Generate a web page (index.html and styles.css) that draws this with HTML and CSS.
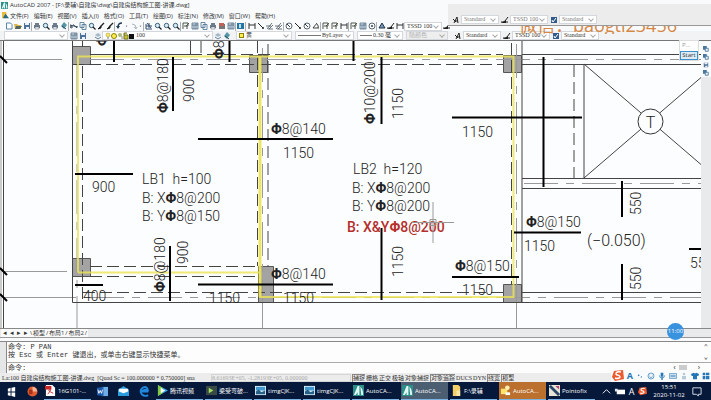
FILE: index.html
```html
<!DOCTYPE html>
<html lang="zh-CN">
<head>
    <meta charset="UTF-8">
    <meta name="viewport" content="width=device-width, initial-scale=1.0">
    <title>AutoCAD 2007</title>
    <link rel="stylesheet" href="styles.css">
</head>
<body>
    <!-- icon set -->
    <svg class="sprite" aria-hidden="true">
        <symbol id="new" viewBox="0 0 8 8"><path d="M1.5 1h4l1.5 1.500v4.500h-5.500z" fill="#fff" stroke="#5b87ad"/></symbol>
        <symbol id="open" viewBox="0 0 8 8"><path d="M0 2h3l1 1h3v4H1z" fill="#d8b74c"/><path d="M2 4h6L6 7H1z" fill="#54645f"/></symbol>
        <symbol id="save" viewBox="0 0 8 8"><path d="M1 1h6v6H1z" fill="#4d7194"/><path d="M2 1h4v2H2zM3 5h3v2H3z" fill="#eef"/></symbol>
        <symbol id="print" viewBox="0 0 8 8"><path d="M2 1h4v2h1v3H1V3h1z" fill="#6e7c8c"/><path d="M2 5h4v2H2z" fill="#fff" stroke="#456" stroke-width=".5"/></symbol>
        <symbol id="find" viewBox="0 0 8 8"><circle cx="3.500" cy="3.500" r="2.200" fill="#d8ebf5" stroke="#3b6078"/><path d="M5 5l2.500 2.500" stroke="#222" stroke-width="1.300"/></symbol>
        <symbol id="globe" viewBox="0 0 8 8"><path d="M4 0l3 3-3 4-3-3z" fill="#5597a5"/><path d="M2 4l4 3" stroke="#285064"/></symbol>
        <symbol id="cut" viewBox="0 0 8 8"><path d="M0 3l8 2M3 2.500L7 6M1 3v3" fill="none" stroke="#33475c"/><circle cx="1.500" cy="5" r="1" fill="none" stroke="#33475c" stroke-width=".7"/></symbol>
        <symbol id="copy" viewBox="0 0 8 8"><path d="M1 .5h4v5H1zM3 2.500h4v5H3z" fill="#f7fbff" stroke="#49718f" stroke-width=".8"/></symbol>
        <symbol id="brush" viewBox="0 0 8 8"><path d="M7 1L3 5" stroke="#222" stroke-width="1.300"/><path d="M4 4L1 7l3-1z" fill="#222" stroke="#222"/></symbol>
        <symbol id="undo" viewBox="0 0 8 8"><path d="M6 1Q2 1 2 5" fill="none" stroke="#223b56" stroke-width="1.500"/><path d="M0 4l2 3 2-3z" fill="#223b56"/></symbol>
        <symbol id="redo" viewBox="0 0 8 8"><path d="M2 2q4 0 4 4M4 5l2 2 1-2" fill="none" stroke="#99a3ac" stroke-width=".8"/></symbol>
        <symbol id="drop" viewBox="0 0 8 8"><path d="M2.500 3.500h3L4 5z" fill="#333"/></symbol>
        <symbol id="pan" viewBox="0 0 8 8"><path d="M1 2v5h6M2 1l4 5M4 1v5M1 4h6" fill="none" stroke="#344f6c"/></symbol>
        <symbol id="props" viewBox="0 0 8 8"><path d="M1 1h6v6H1zM1 3h6M3 3v4M5 1v6" fill="#dae5ef" stroke="#3f5c75" stroke-width=".7"/></symbol>
        <symbol id="red" viewBox="0 0 8 8"><path d="M1 2h6v5H1z" fill="#777"/><path d="M1 1h5v3H1z" fill="#be6459"/></symbol>
        <symbol id="blue" viewBox="0 0 8 8"><path d="M0 1h7v6H0z" fill="#2674a1"/><path d="M2 2h2v4H2z" fill="#b9e1ef"/></symbol>
        <symbol id="dim" viewBox="0 0 8 8"><path d="M1 1v6M7 1v6M1 3h6" stroke="#333" fill="none"/></symbol>
        <symbol id="line" viewBox="0 0 8 8"><path d="M1 1l5 5" stroke="#222"/><circle cx="6" cy="6" r="1" fill="#222"/></symbol>
        <symbol id="align" viewBox="0 0 8 8"><path d="M1 7l5-6M3 7l4-4M0 4h5M2 7h5" stroke="#45525e" fill="none" stroke-width=".8"/></symbol>
        <symbol id="arc" viewBox="0 0 8 8"><circle cx="4" cy="4" r="3" fill="none" stroke="#36414b" stroke-width=".8"/><path d="M2 2l3 3" stroke="#36414b"/></symbol>
        <symbol id="target" viewBox="0 0 8 8"><circle cx="4" cy="4" r="3" fill="none" stroke="#36414b" stroke-width=".8"/><circle cx="4" cy="4" r="1" fill="#36414b"/></symbol>
        <symbol id="angle" viewBox="0 0 8 8"><path d="M5 1L1 6h6M5 2q2 2 1 4" stroke="#333" fill="none" stroke-width=".9"/></symbol>
        <symbol id="quick" viewBox="0 0 8 8"><path d="M1 7V1h5v3H2M4 4l3-3M5 7V4" stroke="#4e5848" fill="none"/></symbol>
        <symbol id="tri" viewBox="0 0 8 8"><path d="M4 1L1 6h6z" fill="#7898b4" stroke="#203551"/></symbol>
        <symbol id="pen" viewBox="0 0 8 8"><path d="M7 1L4 5M0 6h7" stroke="#222"/><path d="M0 7l5-3v3z" fill="#222"/></symbol>
        <symbol id="text" viewBox="0 0 8 8"><path d="M2 7l3-6 1 6M3 5h3M1 3l3 3" stroke="#222" fill="none"/></symbol>
        <symbol id="check" viewBox="0 0 8 8"><path d="M1 1h6v6H1z" fill="#315b8c"/><path d="M2 4l1 2 3-4" stroke="#fff" fill="none"/></symbol>
        <symbol id="layers" viewBox="0 0 8 8"><path d="M1 3l3-2 3 2-3 2z" fill="#a6b9cb"/><path d="M1 5l3 2 3-2" stroke="#6782a1" fill="none"/></symbol>
        <symbol id="draworder" viewBox="0 0 8 8"><path d="M0 0h5v5H0z" fill="#4878a0"/><path d="M3 3h4v4H3z" fill="#e7f1f8" stroke="#3a6690"/></symbol>
        <symbol id="acad" viewBox="0 0 12 12"><path d="M0 0h12v12H0z" fill="#2b8e88"/><path d="M1 11L5 1h2v10H5V8L3 11zM8 2q3 2 3 9H9z" fill="#e2f7f3"/></symbol>
        <symbol id="photo" viewBox="0 0 12 12"><path d="M0 1h12v10H0z" fill="#d7edf8"/><path d="M1 2h10v4H1z" fill="#4398cf"/><path d="M1 10V7l3-2 3 3 4-2v4z" fill="#276087"/></symbol>
        <symbol id="sogou" viewBox="0 0 12 12"><path d="M2 1l9-1 1 9-9 2-3-4z" fill="#ed582d"/><path d="M9 2Q4 1 4 4q0 1 3 1.500Q9 7 7 8 5 9 3 8" fill="none" stroke="#fff" stroke-width="1.500"/></symbol>
    </svg>

    <div class="app">
        <header class="titlebar">
            <svg class="icon"><use href="#acad"/></svg>
            <h1>AutoCAD 2007 - [F:\录辅\自建房\dwg\自建房结构施工图-讲课.dwg]</h1>
        </header>

        <nav class="menubar">
            <svg class="icon" viewBox="0 0 8 8"><path d="M0 0h5v7H0z" fill="#e9be3d"/><path d="M2 5l2-3 4 5H1z" fill="#286984"/></svg>
            <button>文件(F)</button><button>编辑(E)</button><button>视图(V)</button><button>插入(I)</button><button>格式(O)</button><button>工具(T)</button><button>绘图(D)</button><button>标注(N)</button><button>修改(M)</button><button>窗口(W)</button><button>帮助(H)</button>
        </nav>

        <div class="toolbar">
            <div class="group">
                <button aria-label="新建"><svg><use href="#new"/></svg></button>
                <button aria-label="打开"><svg><use href="#open"/></svg></button>
                <button aria-label="保存"><svg><use href="#save"/></svg></button>
            </div>
            <div class="group">
                <button aria-label="打印"><svg><use href="#print"/></svg></button>
                <button aria-label="预览"><svg><use href="#find"/></svg></button>
                <button aria-label="发布"><svg><use href="#print"/></svg></button>
                <button aria-label="网上发布"><svg><use href="#globe"/></svg></button>
            </div>
            <div class="group">
                <button aria-label="剪切"><svg><use href="#cut"/></svg></button>
                <button aria-label="复制"><svg><use href="#copy"/></svg></button>
                <button aria-label="粘贴"><svg><use href="#find"/></svg></button>
                <button aria-label="特性匹配"><svg><use href="#brush"/></svg></button>
                <button aria-label="块编辑"><svg><use href="#brush"/></svg></button>
            </div>
            <div class="group">
                <button aria-label="放弃"><svg><use href="#undo"/></svg></button>
                <button class="slim" aria-label="放弃列表"><svg><use href="#drop"/></svg></button>
                <button aria-label="重做"><svg><use href="#redo"/></svg></button>
                <button class="slim" aria-label="重做列表"><svg><use href="#drop"/></svg></button>
            </div>
            <div class="group">
                <button aria-label="平移"><svg><use href="#pan"/></svg></button>
                <button aria-label="实时缩放"><svg><use href="#find"/></svg></button>
                <button aria-label="窗口缩放"><svg><use href="#find"/></svg></button>
                <button aria-label="上一个"><svg><use href="#find"/></svg></button>
            </div>
            <div class="group">
                <button aria-label="特性"><svg><use href="#quick"/></svg></button>
                <button aria-label="设计中心"><svg><use href="#props"/></svg></button>
                <button aria-label="工具选项板"><svg><use href="#copy"/></svg></button>
                <button aria-label="图纸集"><svg><use href="#print"/></svg></button>
                <button aria-label="标记集"><svg><use href="#red"/></svg></button>
                <button aria-label="计算器"><svg><use href="#props"/></svg></button>
            </div>
            <div class="group help">
                <button aria-label="帮助"><svg><use href="#blue"/></svg></button>
            </div>
            <div class="group">
                <button aria-label="线性"><svg><use href="#dim"/></svg></button>
                <button aria-label="对齐"><svg><use href="#line"/></svg></button>
                <button aria-label="弧长"><svg><use href="#align"/></svg></button>
                <button aria-label="坐标"><svg><use href="#align"/></svg></button>
            </div>
            <div class="group">
                <button aria-label="半径"><svg><use href="#arc"/></svg></button>
                <button aria-label="折弯"><svg><use href="#line"/></svg></button>
                <button aria-label="直径"><svg><use href="#arc"/></svg></button>
                <button aria-label="角度"><svg><use href="#angle"/></svg></button>
            </div>
            <div class="group">
                <button aria-label="快速标注"><svg><use href="#quick"/></svg></button>
                <button aria-label="基线"><svg><use href="#quick"/></svg></button>
                <button aria-label="连续"><svg><use href="#dim"/></svg></button>
            </div>
            <div class="group">
                <button aria-label="引线"><svg><use href="#quick"/></svg></button>
                <button aria-label="公差"><svg><use href="#props"/></svg></button>
                <button aria-label="圆心"><svg><use href="#target"/></svg></button>
            </div>
            <div class="group last">
                <button aria-label="编辑标注"><svg><use href="#tri"/></svg></button>
                <button aria-label="编辑文字"><svg><use href="#pen"/></svg></button>
                <button aria-label="更新"><svg><use href="#dim"/></svg></button>
            </div>
            <label class="combo style"><select aria-label="当前标注样式"><option>TSSD 100</option></select></label>
            <button aria-label="标注样式"><svg><use href="#pen"/></svg></button>
        </div>

        <div class="toolbar properties">
            <label class="combo workspace"><select aria-label="工作空间"><option></option></select></label>
            <button aria-label="工作空间设置"><svg><use href="#props"/></svg></button>
            <button aria-label="我的工作空间"><svg><use href="#save"/></svg></button>
            <button class="spaced" aria-label="图层特性"><svg><use href="#layers"/></svg></button>
            <label class="combo layer">
                <svg class="layer-state" viewBox="0 0 29 8"><circle cx="3" cy="3" r="2" fill="#f5e36a" stroke="#a89220" stroke-width=".5"/><path d="M2 6h2" stroke="#777"/><circle cx="9" cy="4" r="2.500" fill="#fff04d" stroke="#8c8100"/><circle cx="15" cy="3" r="2" fill="#a9bb7c"/><path d="M17 4v3" stroke="#888"/><path d="M19 3h4v4h-4zM19 3V1h3" fill="#c6c22d" stroke="#777726"/><path d="M24 2h5v5h-5z" fill="#111"/></svg>
                <select aria-label="图层"><option>100</option></select>
            </label>
            <button aria-label="置为当前"><svg><use href="#layers"/></svg></button>
            <button aria-label="上一个图层"><svg><use href="#globe"/></svg></button>
            <label class="combo color"><i class="swatch"></i><select aria-label="颜色"><option>黄</option></select></label>
            <label class="combo linetype"><i class="rule"></i><select aria-label="线型"><option>ByLayer</option></select></label>
            <label class="combo weight"><i class="rule"></i><select aria-label="线宽"><option>0.30 毫</option></select></label>
            <label class="combo plot"><select aria-label="打印样式" disabled><option>随颜色</option></select></label>
            <div class="styles">
                <button aria-label="文字样式"><svg><use href="#text"/></svg></button>
                <label class="combo style"><select aria-label="文字样式列表"><option>Standard</option></select></label>
                <button aria-label="标注样式"><svg><use href="#pen"/></svg></button>
                <label class="combo style"><select aria-label="标注样式列表"><option>TSSD 100</option></select></label>
                <button aria-label="表格样式"><svg><use href="#check"/></svg></button>
                <label class="combo style"><select aria-label="表格样式列表"><option>Standard</option></select></label>
            </div>
        </div>

        <main class="workspace-area">
            <svg class="drawing" viewBox="0 41 701 288" preserveAspectRatio="xMinYMin slice">
                <!-- columns -->
                <g class="column">
                    <path d="M72.500 46.500h18v18h-18zM249.500 55.500h18v17h-18zM503.500 55.500h18v17h-18zM72.500 258.500h18v18h-18zM258.500 266.500h15v36h-15zM503.500 284.500h18v18h-18z"/>
                </g>
                <!-- axes -->
                <g class="axis">
                    <path d="M1 41V329M4 59.500H62M4 271.500H67M4 297.500H76"/>
                    <path d="M77 302V329M262.500 302V329M516.500 302V329"/>
                    <path class="dashdot" d="M90 59.500H701M77 64V302M262.500 48V302M516.500 44V302M90 297.500H701M524 183.500H701"/>
                </g>
                <!-- beams -->
                <g class="beam">
                    <path d="M3.500 41V329M72.500 41V302.500H701M90 54.500H190M190.500 41V54.500M522 41V302M522 54.500H701M522 64.500H701M522 178.500H701M522 188.500H701M522 292.500H701M584 64V178M584 64L701 164.500M584 178L701 77.500M82.500 41V47"/>
                    <path class="dash" d="M190 54.500H503M72 64.500H503M82.500 66V300M257.500 41V266M268 44V266M90 266.500H258M90 276.500H258M83 292.500H503M511.500 43V284M574 65V178M201 41V54"/>
                </g>
                <path class="yellow" d="M78 272.500V56.500H513.500V297H260V57M78 272.500H260"/>
                <path class="yellow wide" d="M260 57V297"/>
                <circle class="tag" cx="650.500" cy="121.500" r="12.500"/>
                <!-- rebar -->
                <path class="rebar" d="M0 56l7 7M0 268l7 7M0 294l7 7M114 41V62M229.500 41V62M173 57V111M353.500 41V61M381.500 57V124M198 139H333M75 174H133M452 117.500H582M543.500 57V187M75 285H103M170 246V301M198 284.500H333M381.500 228V300M514 232.500H581M452 277H519M622 181V217M622 264V300M689 249H701"/>

                <g class="labels">
                    <text x="142" y="184">LB1&#160; h=100</text>
                    <text x="142" y="203">B: X<tspan class="phi">Φ</tspan>8@200</text>
                    <text x="142" y="221">B: Y<tspan class="phi">Φ</tspan>8@150</text>
                    <text x="353" y="174">LB2&#160; h=120</text>
                    <text x="352" y="193">B: X<tspan class="phi">Φ</tspan>8@200</text>
                    <text x="352" y="211">B: Y<tspan class="phi">Φ</tspan>8@200</text>
                    <text class="note" x="347" y="232">B: X&amp;Y<tspan class="phi">Φ</tspan>8@200</text>
                    <text x="92" y="192">900</text>
                    <text x="83" y="301">400</text>
                    <text x="209" y="303">1150</text>
                    <text x="271" y="134"><tspan class="phi">Φ</tspan>8@140</text>
                    <text x="283" y="158">1150</text>
                    <text x="271" y="279"><tspan class="phi">Φ</tspan>8@140</text>
                    <text x="283" y="303">1150</text>
                    <text x="462" y="137">1150</text>
                    <text x="526" y="227"><tspan class="phi">Φ</tspan>8@150</text>
                    <text x="524" y="251">1150</text>
                    <text x="455" y="271"><tspan class="phi">Φ</tspan>8@150</text>
                    <text x="462" y="295">1150</text>
                    <text x="587" y="246" class="level">(−0.050)</text>
                    <text x="690" y="268">55</text>
                    <text x="650.500" y="128" text-anchor="middle" class="level">T</text>
                    <text transform="translate(168 113) rotate(-90)"><tspan class="phi">Φ</tspan>8@180</text>
                    <text transform="translate(194 102) rotate(-90)">900</text>
                    <text transform="translate(107 46) rotate(-90)"><tspan class="phi">Φ</tspan>8@180</text>
                    <text transform="translate(224 59) rotate(-90)"><tspan class="phi">Φ</tspan>8@180</text>
                    <text transform="translate(375 124) rotate(-90)"><tspan class="phi">Φ</tspan>10@200</text>
                    <text transform="translate(403 119) rotate(-90)">1150</text>
                    <text transform="translate(165 292) rotate(-90)"><tspan class="phi">Φ</tspan>8@180</text>
                    <text transform="translate(188 264) rotate(-90)">900</text>
                    <text transform="translate(403 277) rotate(-90)">1150</text>
                    <text transform="translate(641 215) rotate(-90)">550</text>
                    <text transform="translate(641 290) rotate(-90)">550</text>
                </g>
                <path class="cursor" d="M433 202v41M412 222.500h42M430 219.500h6v6h-6z"/>
            </svg>
            <aside class="side">
                <div class="draworder">
                    <button aria-label="前置"><svg><use href="#draworder"/></svg></button>
                    <button aria-label="后置"><svg><use href="#draworder"/></svg></button>
                    <button aria-label="置于对象之上"><svg><use href="#save"/></svg></button>
                    <button aria-label="置于对象之下"><svg><use href="#draworder"/></svg></button>
                </div>
            </aside>
        </main>

        <div class="tabs">
            <button aria-label="第一个">◂</button><button aria-label="上一个">◂</button><button aria-label="下一个">▸</button><button aria-label="最后一个">▸</button>
            <div class="tab-list"><b>\</b><button>模型</button><b>/</b><button>布局1</button><b>/</b><button>布局2</button><b>/</b></div>
        </div>

        <section class="command">
            <div class="history">
                <p>命令: P PAN</p>
                <p>按 Esc 或 Enter 键退出，或单击右键显示快捷菜单。</p>
                <div class="scroll-v"><span>⌃</span><span>⌄</span></div>
            </div>
            <div class="prompt">
                <label for="cmd">命令:</label>
                <input id="cmd" type="text">
                <div class="scroll-h"><span>‹</span><i></i><span>›</span></div>
            </div>
        </section>

        <footer class="status">
            <span class="info">La:100 自建房结构施工图-讲课.dwg&#160; [Quad Sc = 100.000000 * 0.750000] sna</span>
            <span class="coords">8.61693E+05, -1.28193E+05, 0.000000</span>
            <button class="on">捕捉</button><button>栅格</button><button>正交</button><button>极轴</button><button>对象捕捉</button><button class="on">对象追踪</button><button>DUCS</button><button>DYN</button><button class="on">线宽</button><button class="on">模型</button>
        </footer>
    </div>

    <footer class="taskbar">
        <button class="pin" aria-label="开始"><svg viewBox="0 0 12 12"><path d="M2 3l3-1v4H2zM6 2l4-1v5H6zM2 7h3v4l-3-1zM6 7h4v5l-4-1z" fill="#fff"/></svg></button>
        <button class="pin" aria-label="PowerPoint"><svg viewBox="0 0 12 12"><circle cx="6" cy="6" r="5.500" fill="#e35d32"/><path d="M6 1a5 5 0 0 1 5 5H6z" fill="#f8b699"/><path d="M2 4h4v5H2z" fill="#a83218"/></svg></button>
        <button class="task"><svg viewBox="0 0 12 12"><path d="M1 0h7l3 3v9H1z" fill="#fff"/><path d="M0 1h7v4H0z" fill="#c9282b"/><path d="M3 10q5-6 2-5t4 4" stroke="#c9282b" fill="none"/></svg><span>16G101-...</span></button>
        <button class="pin" aria-label="Word"><svg viewBox="0 0 12 12"><path d="M5 1h7v10H5z" fill="#6eaee7"/><path d="M0 2l7-1v10l-7-1z" fill="#1c59a9"/><path d="M1 4l1 4 1.500-3L5 8l1-4" stroke="#fff" fill="none"/></svg></button>
        <button class="pin" aria-label="邮件"><svg viewBox="0 0 12 12"><path d="M0 4l6-4 6 4v7H0z" fill="#2a9bdc"/><path d="M1 3h10v3L6 8 1 6z" fill="#fff"/></svg></button>
        <button class="pin" aria-label="Edge"><svg viewBox="0 0 12 12"><path d="M10 6H3q4-4 7 0Q9-1 4 2 0 5 3 9q3 3 7 1" fill="none" stroke="#2187dc" stroke-width="2"/></svg></button>
        <button class="task"><svg viewBox="0 0 12 12"><path d="M1 0l11 6-11 6z" fill="#35a7e7"/><path d="M1 0l5 3v6l-5 3z" fill="#82c83e"/><path d="M4 3l5 3-5 3z" fill="#fff"/></svg><span>腾讯视频</span></button>
        <button class="task"><svg viewBox="0 0 12 12"><path d="M0 1h12v10H0z" fill="#394a45"/><path d="M3 3l5 3-5 3z" fill="#a6dd65"/></svg><span>梁受弯破...</span></button>
        <button class="task"><svg><use href="#photo"/></svg><span>timgCJK...</span></button>
        <button class="task"><svg><use href="#photo"/></svg><span>timgCJK...</span></button>
        <button class="task"><svg><use href="#acad"/></svg><span>AutoCA...</span></button>
        <button class="task active"><svg><use href="#acad"/></svg><span>AutoCA...</span></button>
        <button class="task"><svg viewBox="0 0 12 12"><path d="M2 0h6l2 2v10H2z" fill="#f4cf68"/><path d="M6 6h4v6H6z" fill="#fbe8a7"/></svg><span>F:\录辅</span></button>
        <button class="task alert"><svg viewBox="0 0 12 12"><path d="M1 4h7v6H1z" fill="#ffe26c"/><circle cx="8" cy="3" r="2.500" fill="#fff0b2"/><path d="M6 8h5v3H6z" fill="#fff"/></svg><span>AutoCA...</span></button>
        <button class="task"><svg viewBox="0 0 12 12"><path d="M0 0h12v12H0z" fill="#e8e5d2"/><path d="M1 1l10 10" stroke="#29476d" stroke-width="3"/><path d="M7 1h4v4z" fill="#b53d6f"/></svg><span>Pointofix</span></button>
        <div class="tray">
            <svg viewBox="0 0 12 12"><path d="M2 8l4-4 4 4" stroke="#fff" fill="none"/></svg>
            <svg viewBox="0 0 12 12"><path d="M3 4h9v5H3z" fill="#fff"/><path d="M1 3h3v3H1z" fill="#dfe5ee"/></svg>
            <span class="ime">A</span>
            <svg class="small"><use href="#sogou"/></svg>
            <time>15:51<br>2020-11-02</time>
            <svg viewBox="0 0 12 12"><path d="M2 2h9v7H8v2L6 9H2z" stroke="#dfe5ee" fill="none"/></svg>
        </div>
    </footer>

    <!-- things floating over the window -->
    <div class="watermark">微信：baogti23456</div>
    <div class="float-bar toolbar">
        <button aria-label="文字样式"><svg><use href="#text"/></svg></button>
        <label class="combo style"><select aria-label="文字样式"><option>Standard</option></select></label>
        <button aria-label="标注样式"><svg><use href="#pen"/></svg></button>
        <label class="combo style"><select aria-label="标注样式"><option>TSSD 100</option></select></label>
        <button aria-label="表格样式"><svg><use href="#check"/></svg></button>
        <label class="combo style"><select aria-label="表格样式"><option>Standard</option></select></label>
    </div>
    <div class="starter"><p>P...</p><button>Start</button></div>
    <div class="timer">11:00</div>
    <div class="ime-bar">
        <svg><use href="#sogou"/></svg>
        <b>A</b>
        <svg viewBox="0 0 12 12"><circle cx="4" cy="5" r="1.200" fill="#2376b7"/><path d="M8 6q1 2-1 3" stroke="#2376b7" fill="none"/></svg>
        <svg viewBox="0 0 12 12"><circle cx="6" cy="6" r="4.500" fill="none" stroke="#2376b7"/><path d="M4 4v1M8 4v1M3.500 7q2.500 3 5 0" stroke="#2376b7" fill="none"/></svg>
        <svg viewBox="0 0 12 12"><path d="M4 1h4v6H4zM5 8h2v4H5z" fill="#2376b7"/><path d="M2 5q0 4 4 4t4-4" stroke="#2376b7" fill="none"/></svg>
        <svg viewBox="0 0 12 12"><path d="M.5 2.500h11v7H.5zM2 5h8M2 7h8" stroke="#2376b7" fill="none"/></svg>
        <svg viewBox="0 0 12 12"><circle cx="6" cy="3" r="2" fill="#b6cbd9"/><path d="M3 6h6v5H3z" fill="#b6cbd9"/></svg>
        <svg viewBox="0 0 12 12"><path d="M0 3l4-2q2 2 4 0l4 2-1 3H9v5H3V6H1z" fill="#2376b7"/></svg>
        <svg viewBox="0 0 12 12"><path d="M1 1h4v4H1zM6 1h5v4H6zM1 6h4v5H1zM6 6h5v5H6z" fill="#2376b7"/></svg>
    </div>
</body>
</html>
```
FILE: styles.css
```css
* {
    box-sizing: border-box;
}

body {
    margin: 0;
    height: 100vh;
    display: flex;
    flex-direction: column;
    overflow: hidden;
    font-family: "Open Sans", "Noto Sans CJK SC", sans-serif;
    font-size: 6px;
    color: #333;
    background: #f8fafc;
}

button,
select,
input {
    font: inherit;
    color: inherit;
    margin: 0;
    padding: 0;
    border: none;
    border-radius: 0;
    background: none;
}

p {
    margin: 0;
}

.sprite {
    position: absolute;
    width: 0;
    height: 0;
}

.app {
    flex: 1;
    min-height: 0;
    display: flex;
    flex-direction: column;
}

/* title and menu */
.titlebar {
    height: 10px;
    display: flex;
    align-items: center;
    gap: 2px;
    padding: 1px 1px 0;
}

.icon {
    width: 7px;
    height: 7px;
}

.titlebar h1 {
    margin: 0;
    font-size: 6px;
    font-weight: normal;
    line-height: 9px;
    white-space: nowrap;
}

.menubar {
    height: 11px;
    display: flex;
    align-items: center;
    gap: 5px;
    padding-left: 2px;
    line-height: 10px;
}

.menubar .icon {
    margin-right: -4px;
}

.menubar button {
    white-space: nowrap;
}

/* toolbars */
.toolbar {
    height: 10px;
    display: flex;
    align-items: center;
    padding-left: 4px;
    font-family: "Liberation Serif", "Noto Sans CJK SC", serif;
}

.toolbar button {
    width: 9px;
    height: 9px;
    flex: none;
    display: flex;
    align-items: center;
    justify-content: center;
}

.toolbar button svg {
    width: 8px;
    height: 8px;
}

.toolbar .slim {
    width: 5px;
}

.group {
    display: flex;
    border-right: 1px solid #aab0b5;
}

.group.help {
    margin-right: 1px;
}

.group.last {
    border: none;
}

.combo {
    position: relative;
    height: 9px;
    display: flex;
    align-items: center;
    flex: none;
    padding: 0 2px;
    background: #fff;
    border: 1px solid #d4d8dc;
}

.combo::after {
    content: "";
    width: 3px;
    height: 3px;
    flex: none;
    margin: 0 1px 1px 0;
    border: solid #aaa;
    border-width: 0 1px 1px 0;
    transform: rotate(45deg);
}

.combo select {
    appearance: none;
    flex: 1;
    min-width: 0;
    height: 7px;
    line-height: 7px;
}

.style {
    width: 38px;
}

.properties {
    border-bottom: 1px solid #777;
    background: #f1f3f4;
}

.workspace {
    width: 64px;
    margin-right: 1px;
}

.spaced {
    margin-left: 6px;
}

.layer {
    width: 111px;
}

.layer-state {
    width: 29px;
    height: 8px;
    margin-right: 2px;
}

.color {
    width: 56px;
    margin: 0 3px 0 5px;
}

.swatch {
    width: 5px;
    height: 5px;
    margin-right: 2px;
    background: #fff04d;
    border: 1px solid #8c8100;
}

.linetype {
    width: 59px;
    margin-right: 3px;
}

.rule {
    width: 23px;
    height: 1px;
    margin-right: 1px;
    background: #777;
}

.weight {
    width: 46px;
    margin-right: 3px;
}

.weight .rule {
    width: 12px;
}

.plot {
    width: 42px;
    color: #999;
    background: #eee;
}

.styles {
    display: flex;
    align-items: center;
    gap: 1px;
    margin-left: 5px;
}

/* model space */
.workspace-area {
    flex: 1;
    min-height: 0;
    display: flex;
}

.drawing {
    flex: 1;
    min-width: 0;
    height: 100%;
    background: #fcfdfe;
}

.drawing path {
    fill: none;
}

.drawing .column path {
    fill: #a3a3a3;
    stroke: #555;
}

.beam {
    stroke: #444;
}

.axis {
    stroke: #999;
}

.dash {
    stroke-dasharray: 12 5;
}

.dashdot {
    stroke-dasharray: 34 8 8 8;
}

.yellow {
    stroke: #ece354;
    stroke-width: 2;
    opacity: 0.8;
}

.wide {
    stroke-width: 3;
}

.rebar {
    stroke: #000;
    stroke-width: 2;
}

.tag {
    fill: #fcfdfe;
    stroke: #333;
}

.cursor {
    stroke: #999;
}

.labels {
    font-family: "Roboto", sans-serif;
    font-size: 14px;
    font-weight: 300;
    fill: #222;
}

.labels .phi {
    font-weight: bold;
}

.labels .level {
    font-size: 16px;
}

.labels .note {
    fill: #b5302b;
    font-weight: 500;
}

.side {
    width: 10px;
    flex: none;
    background: #e9eaeb;
}

.draworder {
    display: flex;
    flex-direction: column;
    gap: 1px;
    padding: 4px 0 1px 2px;
    background: #f8fafc;
}

.draworder button {
    width: 7px;
    height: 7px;
}

.draworder svg {
    display: block;
    width: 6px;
    height: 6px;
}

/* layout tabs */
.tabs {
    height: 10px;
    display: flex;
    align-items: center;
    padding-left: 1px;
    border-top: 1px solid #888;
    border-bottom: 1px solid #999;
    background: #e9eaeb;
    line-height: 8px;
}

.tabs > button {
    width: 7px;
    font-size: 7px;
    background: #fafafa;
}

.tab-list {
    display: flex;
    background: #fafafa;
}

.tab-list b {
    width: 4px;
    font-weight: normal;
    text-align: center;
}

/* command line */
.command {
    margin-top: 3px;
    padding-left: 6px;
    border-top: 1px solid #888;
    background: #e4e6e8;
    font-family: "Liberation Mono", "Noto Sans CJK SC", monospace;
    font-size: 7px;
    line-height: 8px;
}

.history {
    position: relative;
    height: 21px;
    padding: 1px;
    background: #fdfdfe;
    border-left: 1px solid #888;
    border-bottom: 1px solid #aaa;
}

.scroll-v {
    position: absolute;
    top: 1px;
    right: 3px;
    bottom: 1px;
    display: flex;
    flex-direction: column;
    justify-content: space-between;
}

.prompt {
    height: 10px;
    display: flex;
    align-items: center;
    padding: 0 10px 0 1px;
    background: #fdfdfe;
    border-left: 1px solid #888;
}

.prompt input {
    flex: 1;
    min-width: 0;
    height: 8px;
    outline: none;
}

.scroll-h {
    display: flex;
    align-items: center;
    gap: 2px;
}

.scroll-h i {
    width: 8px;
    height: 7px;
    margin-right: 8px;
    background: #ccc;
}

/* status bar */
.status {
    height: 9px;
    display: flex;
    align-items: center;
    gap: 1px;
    padding-left: 2px;
    background: #ececec;
    font-family: "Liberation Serif", "Noto Sans CJK SC", serif;
    line-height: 8px;
    white-space: nowrap;
}

.info {
    width: 208px;
}

.coords {
    width: 140px;
    border: 1px solid #d5d5d5;
    color: #aaa;
    line-height: 6px;
}

.status button {
    height: 8px;
}

.status .on {
    border: 1px solid #888;
    border-width: 1px 0 0 1px;
    line-height: 6px;
}

/* taskbar */
.taskbar {
    height: 18px;
    flex: none;
    display: flex;
    align-items: stretch;
    padding-left: 1px;
    background: #06193a;
    color: #fff;
    font-size: 6px;
}

.taskbar svg {
    width: 11px;
    height: 11px;
    flex: none;
}

.taskbar .small {
    width: 9px;
    height: 9px;
}

.pin {
    width: 21px;
    display: flex;
    align-items: center;
    justify-content: center;
}

.task {
    width: 47px;
    display: flex;
    align-items: center;
    gap: 2px;
    padding: 0 1px;
    margin: 0 1px;
    border-bottom: 1px solid #78b4e6;
    white-space: nowrap;
    overflow: hidden;
}

.active {
    background: #4b5e72;
}

.alert {
    background: #bb702e;
}

.tray {
    margin-left: auto;
    display: flex;
    align-items: center;
    gap: 2px;
    padding-right: 9px;
}

.tray time {
    width: 40px;
    text-align: center;
    line-height: 8px;
}

.ime {
    width: 9px;
    font-size: 9px;
    text-align: center;
}

/* floating windows */
.watermark {
    position: absolute;
    top: 16px;
    right: 34px;
    height: 18px;
    overflow: hidden;
    font-size: 18px;
    line-height: 18px;
    color: #d58745;
}

.float-bar {
    position: absolute;
    top: 4px;
    right: 0;
    width: 263px;
    height: 22px;
    align-items: flex-end;
    gap: 1px;
    padding: 0 0 1px 3px;
    background: #ececed;
    border-bottom: 1px solid #999;
    color: #777;
}

.starter {
    position: absolute;
    top: 40px;
    right: 12px;
    width: 20px;
    background: #fff;
    border: 1px solid #ddd;
    line-height: 8px;
    color: #999;
}

.starter p {
    padding-left: 2px;
    height: 10px;
}

.starter button {
    width: 100%;
    height: 9px;
    line-height: 7px;
    border: 1px solid #3d8fc9;
    background: #dcebf5;
    color: #333;
}

.timer {
    position: absolute;
    right: 27px;
    bottom: 60px;
    width: 17px;
    height: 17px;
    border-radius: 50%;
    background: #3992de;
    color: #fff;
    line-height: 17px;
    text-align: center;
}

.ime-bar {
    position: absolute;
    right: 0;
    bottom: 18px;
    height: 12px;
    display: flex;
    align-items: center;
    gap: 3px;
    padding: 0 1px;
    background: #f8fafc;
    color: #2376b7;
    font-size: 9px;
    line-height: 12px;
}

.ime-bar svg {
    width: 8px;
    height: 8px;
}

.ime-bar svg:first-child {
    width: 12px;
    height: 12px;
}
```
